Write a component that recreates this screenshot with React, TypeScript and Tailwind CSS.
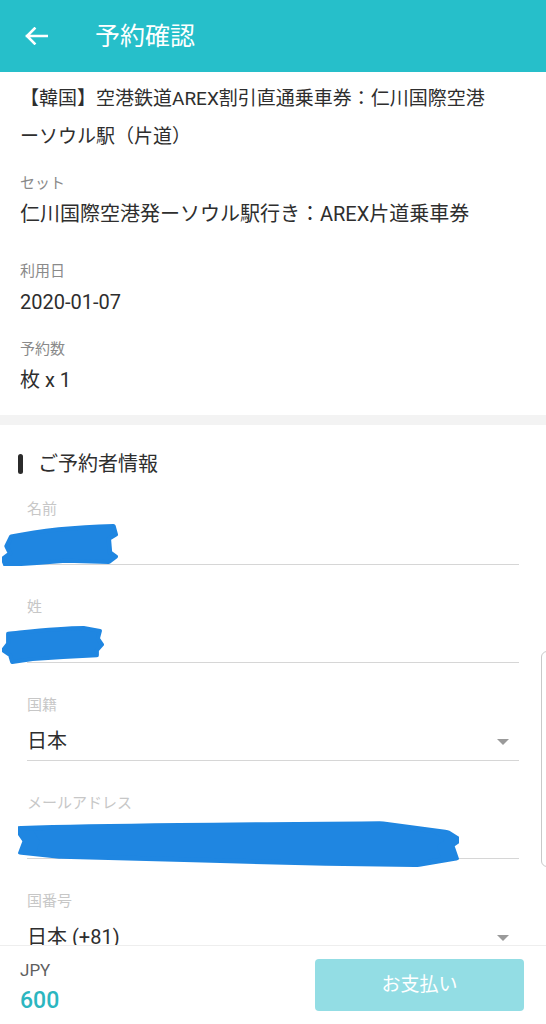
import React from 'react';

// --- Sub Components ---

const Redaction = ({ d, className }: { d: string; className: string }) => (
  <svg className={`absolute pointer-events-none ${className}`} viewBox="0 0 100 40" preserveAspectRatio="none">
    <path d={d} fill="#1f86e1" stroke="#1f86e1" strokeWidth="4" strokeLinejoin="round" />
  </svg>
);

const Caret = () => (
  <svg width="14" height="8" viewBox="0 0 14 8" className="shrink-0">
    <path d="M1 1h12L7 7z" fill="#9a9a9a" />
  </svg>
);

const Field = ({
  label,
  value,
  select,
  children,
}: {
  label: string;
  value?: string;
  select?: boolean;
  children?: React.ReactNode;
}) => (
  <div className="relative">
    <p className="text-[15px] leading-[20px] text-[#c7c7c7]">{label}</p>
    <div className="relative flex items-center justify-between pt-[12px] pb-[4px] border-b border-[#d6d6d6]">
      <span className="text-[20px] leading-[29px] text-[#2e2e2e] h-[29px]">{value}</span>
      {select && (
        <span className="pr-[9px]">
          <Caret />
        </span>
      )}
      {children}
    </div>
  </div>
);

const InfoRow = ({ label, value, className = '' }: { label: string; value: string; className?: string }) => (
  <div className={className}>
    <p className="text-[15px] leading-[22px] text-[#8a8a8a]">{label}</p>
    <p className="text-[20px] leading-[30px] text-[#2e2e2e] mt-[5px]">{value}</p>
  </div>
);

export default function App() {
  return (
    <div
      className="relative w-full h-[1024px] overflow-hidden bg-white"
      style={{ fontFamily: 'Roboto, "Noto Sans CJK JP", "Noto Sans", sans-serif' }}
    >
      {/* header */}
      <header className="h-[72px] bg-[#26bfca] flex items-center">
        <svg width="23" height="18" viewBox="0 0 23 18" className="ml-[25px]">
          <path d="M22 9H2M9.5 1.5 2 9l7.5 7.5" fill="none" stroke="white" strokeWidth="2.6" strokeLinecap="square" />
        </svg>
        <h1 className="ml-[47px] text-[25px] leading-none text-white">予約確認</h1>
      </header>

      {/* product summary */}
      <section className="px-5 pt-[8px] pb-[20px]">
        <h2 className="text-[19px] leading-[38px] text-[#2e2e2e] w-[476px]">
          【韓国】空港鉄道AREX割引直通乗車券：仁川国際空港ーソウル駅（片道）
        </h2>
        <InfoRow label="セット" value="仁川国際空港発ーソウル駅行き：AREX片道乗車券" className="mt-[16px]" />
        <InfoRow label="利用日" value="2020-01-07" className="mt-[31px]" />
        <InfoRow label="予約数" value="枚 x 1" className="mt-[21px]" />
      </section>

      <div className="h-[10px] bg-[#f3f3f3]" />

      {/* booker info */}
      <section className="pt-[25px]">
        <div className="flex items-center pl-[18px]">
          <span className="w-[5px] h-[20px] rounded-full bg-[#2b2b2b]" />
          <h3 className="ml-[15px] text-[20px] leading-[28px] text-[#2e2e2e]">ご予約者情報</h3>
        </div>

        <div className="flex flex-col gap-[32px] pl-[27px] pr-[27px] mt-[21px]">
          <Field label="名前">
            <Redaction
              className="left-[-25px] top-[5px] w-[116px] h-[42px]"
              d="M8 12 C30 7 60 3 96 2 L98 10 L92 14 L93 27 L98 31 L92 36 L55 35 L30 37 L3 39 L1 33 L7 28 L4 21 Z"
            />
          </Field>
          <Field label="姓">
            <Redaction
              className="left-[-25px] top-[8px] w-[102px] h-[39px]"
              d="M6 9 C25 7 55 3 80 3 L96 6 L94 14 L98 20 L93 26 L93 31 L60 33 L30 35 L10 38 L8 31 L1 26 L6 19 Z"
            />
          </Field>
          <Field label="国籍" value="日本" select />
          <Field label="メールアドレス">
            <Redaction
              className="left-[-9px] top-[7px] w-[441px] h-[47px]"
              d="M1 7 C20 5 50 4 82 3 L96 10 L99 17 L97 22 L98 33 L90 38 L70 37 L40 34 L10 31 L2 28 L3 18 Z"
            />
          </Field>
          <Field label="国番号" value="日本 (+81)" select />
        </div>
      </section>

      {/* edge handle */}
      <div className="absolute left-[541px] top-[651px] w-[12px] h-[216px] rounded-l-[6px] border border-[#c9c9c9] bg-white" />

      {/* bottom bar */}
      <footer className="absolute left-0 right-0 bottom-0 h-[79px] bg-white border-t border-[#eeeeee] flex items-center justify-between pl-5 pr-[22px]">
        <div className="flex flex-col pt-[3px]">
          <span className="text-[17px] leading-[22px] text-[#5f5f5f]">JPY</span>
          <span className="text-[23px] leading-[28px] text-[#2bb6c0] font-medium mt-[6px]">600</span>
        </div>
        <button className="w-[209px] h-[52px] rounded-[4px] bg-[#93dde4] text-white text-[19px]">お支払い</button>
      </footer>
    </div>
  );
}
